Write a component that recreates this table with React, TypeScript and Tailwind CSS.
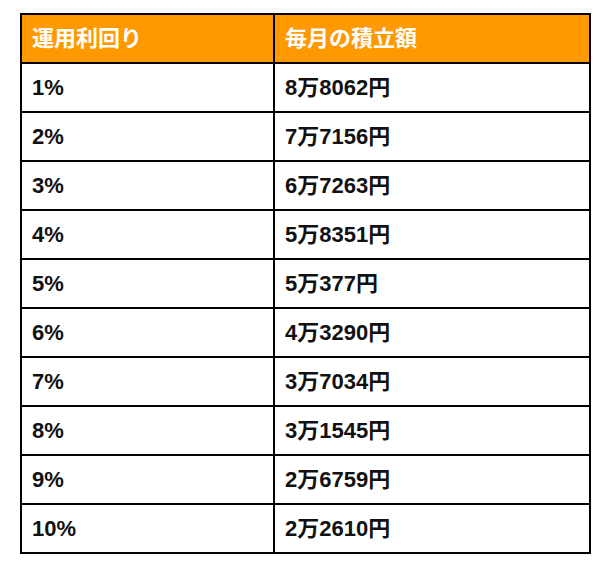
import React from "react";

const rows: [string, string][] = [
  ["1%", "8万8062円"],
  ["2%", "7万7156円"],
  ["3%", "6万7263円"],
  ["4%", "5万8351円"],
  ["5%", "5万377円"],
  ["6%", "4万3290円"],
  ["7%", "3万7034円"],
  ["8%", "3万1545円"],
  ["9%", "2万6759円"],
  ["10%", "2万2610円"],
];

export default function App() {
  return (
    <div
      className="w-[613px] h-[567px] bg-white pt-[13px] pl-[20px]"
      style={{ fontFamily: '"Liberation Sans", "Noto Sans CJK JP", sans-serif' }}
    >
      <table className="border-collapse w-[571px] text-[22px] font-bold text-[#111]">
        <thead>
          <tr className="h-[49px] bg-[#ff9900] text-white">
            <th className="border-2 border-black w-[253px] text-left font-bold pl-[10px] align-middle">運用利回り</th>
            <th className="border-2 border-black text-left font-bold pl-[10px] align-middle">毎月の積立額</th>
          </tr>
        </thead>
        <tbody>
          {rows.map(([a, b]) => (
            <tr key={a} className="h-[49px]">
              <td className="border-2 border-black pl-[10px] align-middle">{a}</td>
              <td className="border-2 border-black pl-[10px] align-middle">{b}</td>
            </tr>
          ))}
        </tbody>
      </table>
    </div>
  );
}
